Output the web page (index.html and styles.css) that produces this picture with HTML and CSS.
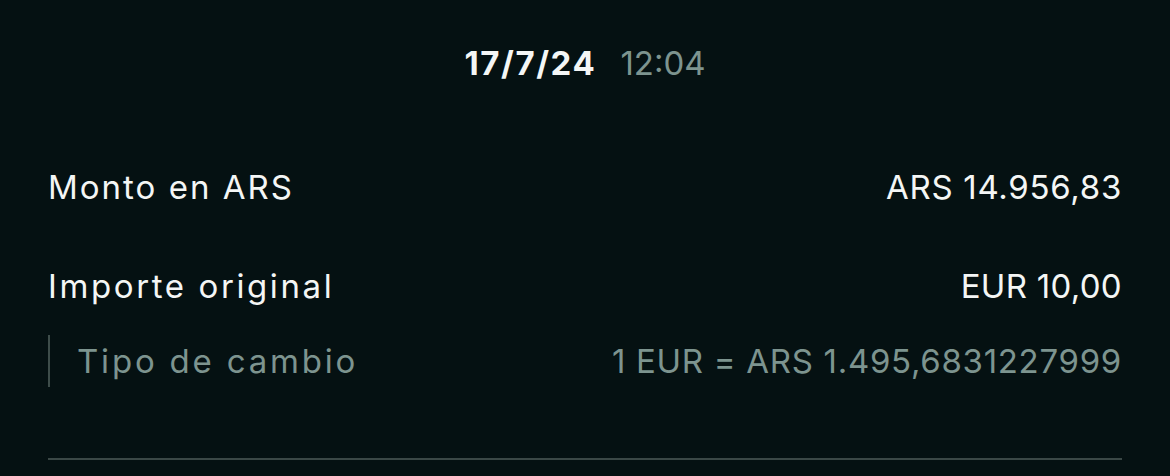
FILE: index.html
```html
<!DOCTYPE html>
<html lang="es">
<head>
    <meta charset="UTF-8">
    <meta name="viewport" content="width=device-width, initial-scale=1.0">
    <title>Detalle del movimiento</title>
    <link rel="stylesheet" href="styles.css">
</head>
<body>
    <div class="detail">
        <div class="stamp">
            <span class="stamp-date">17/7/24</span>
            <span class="stamp-time">12:04</span>
        </div>

        <div class="row row-amount">
            <span class="label">Monto en ARS</span>
            <span class="value">ARS 14.956,83</span>
        </div>

        <div class="row row-original">
            <span class="label">Importe original</span>
            <span class="value">EUR 10,00</span>
        </div>

        <div class="row row-rate">
            <span class="label">Tipo de cambio</span>
            <span class="value">1 EUR = ARS 1.495,6831227999</span>
        </div>

        <hr class="divider">
    </div>
</body>
</html>
```

FILE: styles.css
```css
body, html {
    margin: 0;
    height: 100%;
    background-color: #051112;
    font-family: 'Inter', 'Open Sans', sans-serif;
    color: #f4f6f5;
}
.detail {
    padding: 43px 48px 0;
}
.stamp {
    display: flex;
    justify-content: center;
    align-items: baseline;
    gap: 24px;
    font-size: 33px;
    line-height: 40px;
}
.stamp-date {
    font-weight: 700;
    letter-spacing: 1.6px;
}
.stamp-time {
    color: #7d948f;
}
.row {
    display: flex;
    justify-content: space-between;
    align-items: baseline;
    font-size: 33px;
    line-height: 40px;
}
.label {
    letter-spacing: 2px;
}
.value {
    letter-spacing: 0.7px;
}
.row-amount {
    margin-top: 84px;
}
.row-original {
    margin-top: 59px;
}
.row-original .label {
    letter-spacing: 2.6px;
}
.row-original .value {
    letter-spacing: 0.3px;
}
.row-rate {
    margin-top: 29px;
    padding: 6px 0 6px 27px;
    border-left: 2px solid #3e4d4a;
    color: #7d948f;
}
.row-rate .label {
    letter-spacing: 2.8px;
}
.divider {
    margin: 71px 0 0;
    border: none;
    height: 2px;
    background-color: #3b4846;
}
```
